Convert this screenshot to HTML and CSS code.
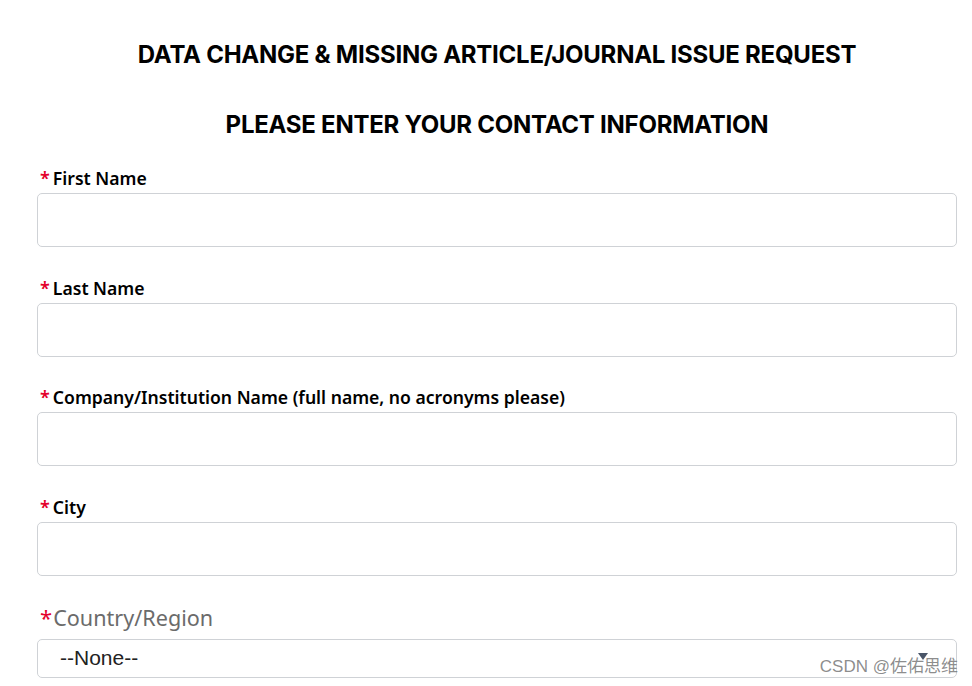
FILE: index.html
```html
<!DOCTYPE html>
<html lang="en">
<head>
<meta charset="utf-8">
<title>Data Change Request</title>
<link rel="stylesheet" href="styles.css">
</head>
<body>
<main class="page">
  <h1 class="title">DATA CHANGE &amp; MISSING ARTICLE/JOURNAL ISSUE REQUEST</h1>
  <h2 class="subtitle">PLEASE ENTER YOUR CONTACT INFORMATION</h2>
  <form class="form">
    <div class="field">
      <label class="label"><span class="req">*</span>First Name</label>
      <input class="input" type="text">
    </div>
    <div class="field">
      <label class="label"><span class="req">*</span>Last Name</label>
      <input class="input" type="text">
    </div>
    <div class="field">
      <label class="label"><span class="req">*</span>Company/Institution Name (full name, no acronyms please)</label>
      <input class="input" type="text">
    </div>
    <div class="field">
      <label class="label"><span class="req">*</span>City</label>
      <input class="input" type="text">
    </div>
    <div class="field field-select">
      <label class="label label-muted"><span class="req">*</span>Country/Region</label>
      <div class="select">
        <span class="select-value">--None--</span>
        <span class="select-arrow"></span>
      </div>
    </div>
  </form>
  <div class="watermark">CSDN @佐佑思维</div>
</main>
</body>
</html>
```
FILE: styles.css
```css
html, body {
  margin: 0;
  padding: 0;
  background: #fff;
}
body {
  font-family: "Noto Sans", "Lato", sans-serif;
  color: #000;
  overflow: hidden;
}
.page {
  width: 920px;
  margin-left: 37px;
  padding-top: 40px;
  height: 646px;
  overflow: hidden;
}
.title, .subtitle {
  margin: 0;
  text-align: center;
  font-family: "Inter", sans-serif;
  font-weight: 700;
  font-size: 24px;
  letter-spacing: -0.25px;
  line-height: 30px;
}
.subtitle {
  margin-top: 40px;
}
.form {
  margin-top: 27px;
  display: flex;
  flex-direction: column;
  gap: 29.7px;
}
.field {
  display: flex;
  flex-direction: column;
  gap: 4px;
}
.label {
  font-size: 17.6px;
  font-weight: 600;
  line-height: 22px;
  display: flex;
  align-items: baseline;
  gap: 3px;
  padding-left: 3px;
}
.req {
  color: #e4002b;
  font-size: 18px;
}
.input {
  box-sizing: border-box;
  height: 54px;
  width: 100%;
  border: 1px solid #cfd2d6;
  border-radius: 5px;
  margin: 0;
  padding: 0 12px;
  font: inherit;
}
.field-select {
  gap: 9px;
  margin-top: -1px;
}
.label-muted {
  font-weight: 400;
  color: #6b6b6b;
  font-size: 21.6px;
  line-height: 24px;
  gap: 1px;
}
.label-muted .req {
  font-size: 22px;
}
.select {
  box-sizing: border-box;
  height: 39px;
  border: 1px solid #cfd2d6;
  border-radius: 5px;
  display: flex;
  align-items: center;
  justify-content: space-between;
  padding: 0 28px 0 22px;
}
.select-value {
  font-family: "Liberation Sans", sans-serif;
  font-size: 21px;
  color: #222;
}
.select-arrow {
  width: 0;
  height: 0;
  border-left: 5px solid transparent;
  border-right: 5px solid transparent;
  border-top: 7px solid #4a5568;
  margin-top: -3px;
}
.watermark {
  position: absolute;
  right: 14px;
  bottom: 9px;
  font-family: "Liberation Sans", "Noto Sans CJK SC", sans-serif;
  font-size: 17px;
  color: rgba(120, 120, 120, 0.85);
}
```
